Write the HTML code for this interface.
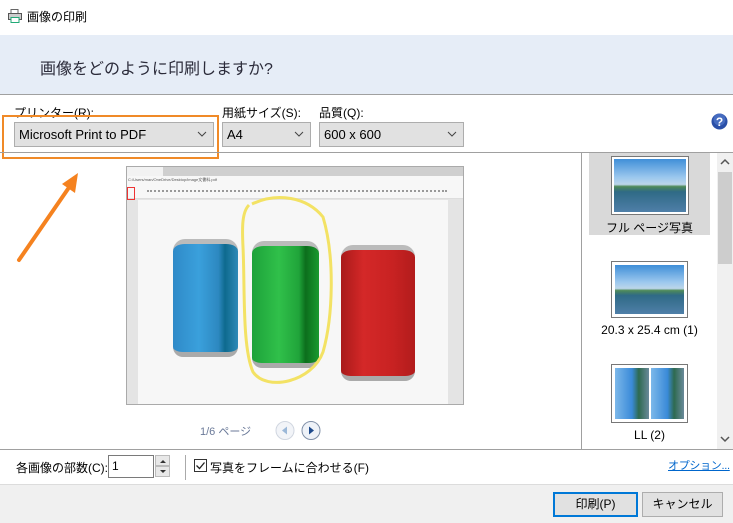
<!DOCTYPE html>
<html><head><meta charset="utf-8"><style>
*{margin:0;padding:0;box-sizing:border-box}
body{width:733px;height:523px;position:relative;overflow:hidden;background:#fff;font-family:"Liberation Sans","Noto Sans CJK JP",sans-serif;font-size:12px;color:#000}
.a{position:absolute;white-space:nowrap}
.dd{position:absolute;top:122px;height:25px;background:#e1e1e1;border:1px solid #adadad;font-size:13px;line-height:23px;padding-left:4px}
.dd svg{position:absolute;right:6px;top:8px}
.thumb{position:absolute;border:1px solid #777;background:#fff;padding:3px}
.land{width:100%;height:100%;background:linear-gradient(180deg,#3f8fd8 0%,#9cc8ee 35%,#bcd6ea 48%,#4e8a58 52%,#2f6a86 62%,#4f7fa8 100%)}
.lbl{position:absolute;text-align:center;font-size:12px}
.btn{position:absolute;top:492px;height:25px;background:#e1e1e1;border:1px solid #adadad;text-align:center;line-height:23px;font-size:12px}
</style></head><body>
<svg class="a" style="left:8px;top:9px" width="14" height="14" viewBox="0 0 14 14"><rect x="3" y="0.5" width="7" height="4" fill="#fff" stroke="#666"/><rect x="0.5" y="4.5" width="13" height="6" fill="#ccc" stroke="#555"/><rect x="3" y="8.5" width="8" height="5" fill="#fff" stroke="#2a7"/></svg>
<div class="a" style="left:27px;top:8px;font-size:12px">画像の印刷</div>
<div class="a" style="left:0;top:35px;width:733px;height:60px;background:#e6edf7;border-bottom:1px solid #a0a0a0"></div>
<div class="a" style="left:40px;top:55px;font-size:16px;color:#2b2b3a">画像をどのように印刷しますか?</div>
<div class="a" style="left:14px;top:104px">プリンター(R):</div>
<div class="a" style="left:222px;top:104px">用紙サイズ(S):</div>
<div class="a" style="left:319px;top:104px">品質(Q):</div>
<div class="dd" style="left:14px;width:200px">Microsoft Print to PDF<svg width="10" height="6"><path d="M1 1l4 4 4-4" stroke="#444" fill="none"/></svg></div>
<div class="dd" style="left:222px;width:89px">A4<svg width="10" height="6"><path d="M1 1l4 4 4-4" stroke="#444" fill="none"/></svg></div>
<div class="dd" style="left:319px;width:145px">600 x 600<svg width="10" height="6"><path d="M1 1l4 4 4-4" stroke="#444" fill="none"/></svg></div>
<div class="a" style="left:2px;top:115px;width:217px;height:44px;border:2px solid #f08a28"></div>
<svg class="a" style="left:711px;top:113px" width="17" height="17"><circle cx="8.5" cy="8.5" r="8" fill="#2a4fa8"/><circle cx="8.5" cy="6.5" r="6" fill="#5a80d0" opacity=".6"/><text x="8.5" y="13" font-size="12" font-weight="bold" fill="#fff" text-anchor="middle" font-family="Liberation Sans">?</text></svg>
<div class="a" style="left:0;top:152px;width:733px;height:1px;background:#a0a0a0"></div>
<svg class="a" style="left:0;top:160px" width="100" height="110"><path d="M19 100L70 26" stroke="#f5821f" stroke-width="4" stroke-linecap="round"/><path d="M78 13L62 24L75 33Z" fill="#f5821f"/></svg>
<div class="a" style="left:126px;top:166px;width:338px;height:239px;border:1px solid #aaa;background:#e4e4e4;overflow:hidden">
 <div class="a" style="left:0;top:0;width:338px;height:9px;background:#cfcfcf"></div>
 <div class="a" style="left:0;top:0;width:36px;height:9px;background:#f2f2f2"></div>
 <div class="a" style="left:0;top:9px;width:338px;height:23px;background:#f7f7f7;border-bottom:1px solid #ddd"></div>
 <div class="a" style="left:1px;top:10px;font-size:4px;color:#555">C:/Users/man/OneDrive/Desktop/image文書料.pdf</div>
 <div class="a" style="left:20px;top:23px;width:300px;height:1px;border-top:2px dotted #999"></div>
 <div class="a" style="left:0;top:20px;width:8px;height:13px;border:1px solid #e33"></div>
 <div class="a" style="left:11px;top:33px;width:310px;height:206px;background:#f7f7f7"></div>
 <div class="a" style="left:46px;top:72px;width:65px;height:118px;border-radius:12px 12px 10px 10px;background:linear-gradient(90deg,#2f8ac8,#3aa0dc 40%,#2d88c0 70%,#0e6a8e 80%,#2e8ab8);border-top:5px solid #bbb;border-bottom:5px solid #aaa"></div>
 <div class="a" style="left:125px;top:74px;width:67px;height:127px;border-radius:12px 12px 10px 10px;background:linear-gradient(90deg,#1da23a,#30c04a 40%,#20a43a 70%,#0c6e1c 80%,#1a9a30);border-top:5px solid #bbb;border-bottom:5px solid #aaa"></div>
 <div class="a" style="left:214px;top:78px;width:74px;height:136px;border-radius:12px 12px 10px 10px;background:linear-gradient(90deg,#a81a1a,#d42828 30%,#c82222 70%,#b21c1c);border-top:5px solid #bbb;border-bottom:5px solid #aaa"></div>
 <svg class="a" style="left:0;top:0" width="338" height="239"><path d="M125 37C150 25 180 30 196 50C208 90 206 150 196 185C185 215 140 225 126 205C115 180 118 120 116 80C115 60 115 45 122 38" stroke="#f3e264" stroke-width="3" fill="none"/></svg>
</div>
<div class="a" style="left:200px;top:423px;color:#6b7a99;font-size:11px">1/6 ページ</div>
<svg class="a" style="left:275px;top:420px" width="50" height="21"><circle cx="10" cy="10.5" r="9" fill="#f2f4f8" stroke="#d0d6e0"/><path d="M12 6.5v8l-5-4z" fill="#9bb8d8"/><circle cx="36" cy="10.5" r="9" fill="#eef2f8" stroke="#8090a8"/><path d="M34 6.5v8l5-4z" fill="#1e4a8c"/></svg>
<div class="a" style="left:581px;top:153px;width:1px;height:296px;background:#a0a0a0"></div>
<div class="a" style="left:589px;top:153px;width:121px;height:82px;background:#d9d9d9"></div>
<div class="thumb" style="left:611px;top:156px;width:78px;height:59px;padding:2px"><div class="land"></div></div>
<div class="lbl" style="left:589px;top:219px;width:121px">フル ページ写真</div>
<div class="thumb" style="left:611px;top:261px;width:77px;height:57px"><div class="land"></div></div>
<div class="lbl" style="left:589px;top:323px;width:121px">20.3 x 25.4 cm (1)</div>
<div class="thumb" style="left:611px;top:364px;width:77px;height:59px;display:flex;gap:2px"><div class="land" style="width:50%;background:linear-gradient(90deg,#7cb8ea,#3a8ad8 50%,#2e6a50 70%,#6a8a9a)"></div><div class="land" style="width:50%;background:linear-gradient(90deg,#7cb8ea,#3a8ad8 50%,#2e6a50 70%,#6a8a9a)"></div></div>
<div class="lbl" style="left:589px;top:428px;width:121px">LL (2)</div>
<div class="a" style="left:717px;top:153px;width:16px;height:296px;background:#f0f0f0"></div>
<div class="a" style="left:718px;top:172px;width:14px;height:92px;background:#cdcdcd"></div>
<svg class="a" style="left:720px;top:158px" width="10" height="8"><path d="M1 6l4-4 4 4" stroke="#555" fill="none" stroke-width="1.5"/></svg>
<svg class="a" style="left:720px;top:435px" width="10" height="8"><path d="M1 2l4 4 4-4" stroke="#555" fill="none" stroke-width="1.5"/></svg>
<div class="a" style="left:0;top:449px;width:733px;height:1px;background:#a0a0a0"></div>
<div class="a" style="left:16px;top:459px">各画像の部数(C):</div>
<div class="a" style="left:108px;top:455px;width:46px;height:23px;border:1px solid #7a7a7a;padding-left:3px;line-height:21px;font-size:12px">1</div>
<div class="a" style="left:155px;top:455px;width:15px;height:11px;background:#e8e8e8;border:1px solid #bbb"></div>
<div class="a" style="left:155px;top:466px;width:15px;height:11px;background:#e8e8e8;border:1px solid #bbb"></div>
<svg class="a" style="left:158px;top:457px" width="10" height="20"><path d="M2 6l3-3 3 3z M2 13l3 3 3-3z" fill="#333"/></svg>
<div class="a" style="left:185px;top:455px;width:1px;height:25px;background:#aaa"></div>
<svg class="a" style="left:194px;top:459px" width="13" height="13"><rect x=".5" y=".5" width="12" height="12" fill="#fff" stroke="#333"/><path d="M2.5 6.5l3 3 5-6" stroke="#222" fill="none" stroke-width="1.3"/></svg>
<div class="a" style="left:210px;top:459px">写真をフレームに合わせる(F)</div>
<div class="a" style="left:668px;top:457px;color:#0066cc;text-decoration:underline;font-size:11px;letter-spacing:-0.3px">オプション...</div>
<div class="a" style="left:0;top:484px;width:733px;height:39px;background:#f0f0f0;border-top:1px solid #dcdcdc"></div>
<div class="btn" style="left:553px;width:85px;border:2px solid #0078d7;line-height:21px">印刷(P)</div>
<div class="btn" style="left:642px;width:81px">キャンセル</div>
</body></html>
